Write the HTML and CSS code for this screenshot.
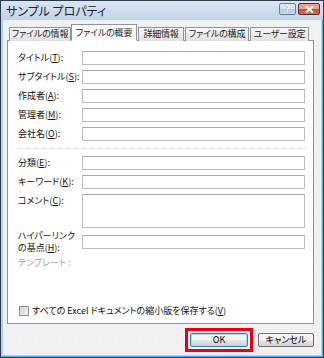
FILE: index.html
```html
<!doctype html>
<html lang="ja">

<head>
	<meta charset="utf-8">
	<meta name="viewport" content="width=device-width, initial-scale=1">
	<title>サンプル プロパティ</title>
	<link rel="stylesheet" href="styles.css">
</head>

<body>

	<div class="window">

		<div class="titlebar">
			<span class="title">サンプル プロパティ</span>
			<div class="caption">
				<button class="cap help">?</button>
				<button class="cap close">
					<svg width="9" height="7" viewBox="0 0 9 7"><path d="M1 0.5 L8 6.5 M8 0.5 L1 6.5" stroke="#fff" stroke-width="2" /></svg>
				</button>
			</div>
		</div>

		<div class="client">

			<div class="tabs">
				<div class="tab t1">ファイルの情報</div>
				<div class="tab t2 active">ファイルの概要</div>
				<div class="tab t3">詳細情報</div>
				<div class="tab t4">ファイルの構成</div>
				<div class="tab t5">ユーザー設定</div>
			</div>

			<div class="panel">

				<div class="fields">
					<label>タイトル(<u>T</u>):</label><input type="text">
					<label>サブタイトル(<u>S</u>):</label><input type="text">
					<label>作成者(<u>A</u>):</label><input type="text">
					<label>管理者(<u>M</u>):</label><input type="text">
					<label>会社名(<u>O</u>):</label><input type="text">
				</div>

				<div class="sep"></div>

				<div class="fields">
					<label>分類(<u>E</u>):</label><input type="text">
					<label>キーワード(<u>K</u>):</label><input type="text">
					<label class="top">コメント(<u>C</u>):</label><textarea></textarea>
					<label class="two">ハイパーリンク<br>の基点(<u>H</u>):</label><input type="text" class="link">
				</div>

				<div class="template">テンプレート :</div>

				<label class="check"><input type="checkbox">すべての Excel ドキュメントの縮小版を保存する(<u>V</u>)</label>

			</div>

			<div class="footer">
				<button class="btn ok">OK</button>
				<button class="btn">キャンセル</button>
			</div>

		</div>

	</div>

</body>

</html>
```

FILE: styles.css
```css
* {
	box-sizing: border-box;
}

html,
body {
	margin: 0;
	padding: 0;
}

body {
	font: 9px "Noto Sans CJK JP", "Noto Sans", sans-serif;
	font-feature-settings: "palt";
	color: #111;
	background: #fff;
}

.window {
	width: 324px;
	height: 358px;
	display: flex;
	flex-direction: column;
	border: 1px solid #2b3c50;
	background: #b9cde4;
	box-shadow: inset -1px -1px 0 #38b8e6;
}

.titlebar {
	height: 19px;
	display: flex;
	align-items: center;
	justify-content: space-between;
	padding: 0 3px 0 5px;
	background: linear-gradient(#d9e5f2, #c2d3e8);
}

.title {
	font-size: 12px;
	color: #1b2430;
	line-height: 19px;
}

.caption {
	display: flex;
	align-self: flex-start;
	margin-top: 2px;
	gap: 2px;
}

.cap {
	height: 12px;
	padding: 0;
	border: 1px solid #6a7e96;
	border-radius: 2px;
	display: flex;
	align-items: center;
	justify-content: center;
	font: bold 9px "DejaVu Sans", sans-serif;
	color: #fff;
}

.help {
	width: 17px;
	background: linear-gradient(#dbe6f2 45%, #b9cbe0 55%, #c8d8ea);
	text-shadow: 0 0 1px #5a6f88;
}

.close {
	width: 22px;
	border-color: #6b2a24;
	background: linear-gradient(#e3a397 45%, #c8503f 55%, #d36a52);
}

.client {
	flex: 1;
	display: flex;
	flex-direction: column;
	margin: 0 2px 2px 2px;
	padding: 4px 7px 8px 4px;
	background-color: #f0f0f0;
	background-image: radial-gradient(#fafafa 0.7px, transparent 0.8px);
	background-size: 5px 5px;
}

.tabs {
	display: flex;
	align-items: flex-end;
	height: 17px;
	padding-left: 2px;
	margin-bottom: -1px;
	position: relative;
	z-index: 1;
}

.tab {
	height: 14px;
	line-height: 12px;
	font-size: 9px;
	letter-spacing: -0.2px;
	text-align: center;
	border: 1px solid #8e959e;
	border-bottom: none;
	background: linear-gradient(#f6f6f6, #e2e2e2);
	white-space: nowrap;
	color: #222;
}

.t1 {
	width: 62px;
}

.t2 {
	width: 66px;
}

.t3 {
	width: 46px;
	margin-left: 1px;
}

.t4 {
	width: 64px;
	margin-left: 1px;
}

.t5 {
	width: 59px;
	margin-left: 1px;
}

.tab.active {
	height: 17px;
	line-height: 15px;
	background: #fff;
	border-bottom: 1px solid #fff;
}

.panel {
	flex: 1;
	display: flex;
	flex-direction: column;
	background: #fff;
	border: 1px solid #8e959e;
	padding: 10px 8px 7px 10px;
}

.fields {
	display: grid;
	grid-template-columns: 64px 1fr;
	row-gap: 5px;
	align-items: center;
}

.fields label {
	line-height: 14px;
	white-space: nowrap;
}

.fields label.top {
	align-self: start;
	line-height: 11px;
	padding-top: 1px;
}

.fields label.two {
	line-height: 12px;
	margin: -3px 0;
}

input[type=text],
textarea {
	appearance: none;
	display: block;
	width: 100%;
	height: 14px;
	margin: 0;
	padding: 0;
	border: 1px solid #bcbcbc;
	border-top-color: #a9a9a9;
	background: #fff;
	resize: none;
	font: inherit;
}

textarea {
	height: 34px;
}

.sep {
	height: 1px;
	margin: 7px 0 7px 0;
	border-top: 1px dotted #cdd6e2;
}

.template {
	color: #a0a0a0;
	margin-top: 5px;
	line-height: 14px;
}

.check {
	margin-top: auto;
	display: flex;
	align-items: center;
	height: 11px;
	white-space: nowrap;
}

.check input {
	appearance: none;
	width: 10px;
	height: 10px;
	margin: 0 3px 0 1px;
	border: 1px solid #8f8f8f;
	background: linear-gradient(135deg, #d4d4d4, #f2f2f2);
}

.footer {
	display: flex;
	justify-content: flex-end;
	gap: 10px;
	margin-top: 9px;
}

.btn {
	height: 14px;
	width: 56px;
	padding: 0;
	border: 1px solid #707070;
	border-radius: 2px;
	background: linear-gradient(#f4f4f4 45%, #e4e4e4 55%, #d2d2d2);
	font: 9px "Noto Sans CJK JP", "Noto Sans", sans-serif;
	font-feature-settings: "palt";
	line-height: 12px;
	color: #000;
}

.btn.ok {
	position: relative;
	width: 58px;
	border-color: #3c7fb1;
	box-shadow: inset 0 0 0 1px #a8d8f0;
}

/* red highlight drawn over the default button */
.btn.ok::after {
	content: "";
	position: absolute;
	inset: -6px;
	border: 3px solid #e60012;
}
```
